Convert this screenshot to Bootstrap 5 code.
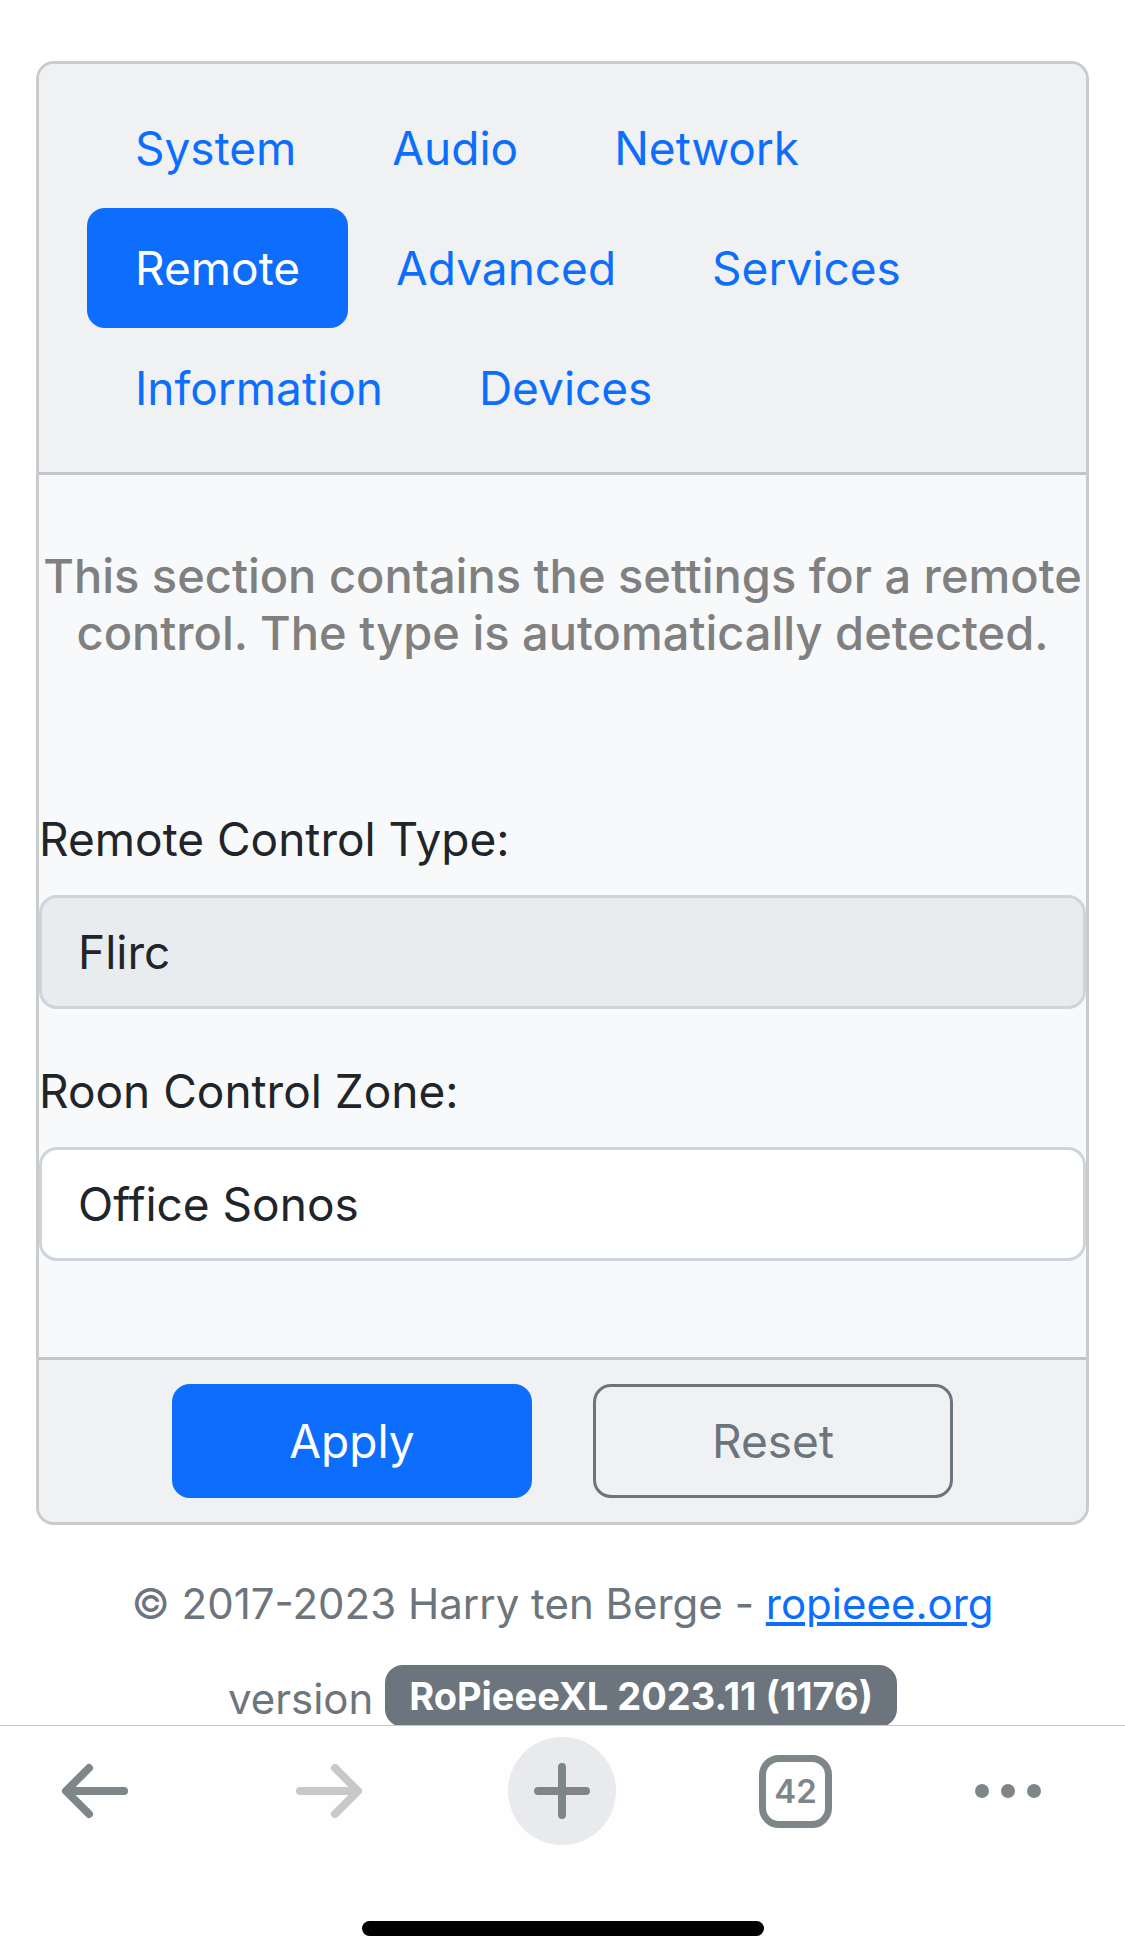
<!DOCTYPE html>
<html lang="en">
<head>
<meta charset="utf-8">
<meta name="viewport" content="width=device-width, initial-scale=1">
<title>RoPieee - Remote</title>
<link href="https://cdn.jsdelivr.net/npm/bootstrap@5.3.0/dist/css/bootstrap.min.css" rel="stylesheet">
<style>
  /* One rem is 48px, so Bootstrap's own paddings and radii scale with it */
  html { font-size: 48px; }
  body {
    --bs-border-width: 3px;
    font-family: Inter, "Liberation Sans", sans-serif;
    font-size: 46px;
    line-height: 72px;
    background: #fff;
    color: #212529;
  }
  .page { padding: 61px 36px 240px; }
  .panel {
    --bs-card-border-width: 3px;
    --bs-card-border-color: #c9cbcd;
    --bs-card-inner-border-radius: 15px;
    --bs-card-cap-bg: #eff1f2;
    background: #f8f9fb;
  }
  .panel .card-header { border-bottom: 3px solid #c3c5c8; padding: 24px 48px; }
  .panel .card-body { padding: 0 0 96px; }
  .panel .card-footer { border-top: 3px solid #c3c5c8; padding: 24px; gap: 61px; }
  .panel .nav-link { font-size: 46px; line-height: 72px; color: #0d6efd; }
  .panel .nav-link.active { color: #fff; background: #0d6efd; }
  .intro {
    font-size: 47px;
    font-weight: 500;
    line-height: 57px;
    color: #808080;
    margin: 72px 0 142px;
  }
  .field { margin-bottom: 46px; }
  .field .form-label { display: block; margin-bottom: 20px; }
  .field .form-control { font-size: 46px; line-height: 72px; height: 114px; border: 3px solid #ced4da; padding: 18px 36px; color: #212529; }
  .field .form-control[readonly] { background: #e9ecef; }
  .panel .btn { width: 360px; font-size: 46px; line-height: 72px; border-width: 3px; padding: 18px 36px; }
  .credits { font-size: 42px; line-height: 63px; color: #6c757d; padding-top: 47px; }
  .credits p { margin: 0 0 30px; }
  .credits .badge { font-size: 38px; line-height: 36px; padding: 13px 24px; border-radius: 18px; background: #6c757d; vertical-align: 4px; }
  .browser-bar { background: #fefefe; border-top: 1px solid #c8c8ca; height: 235px; }
  .tools { padding: 11px 84px 0 41px; color: #7f8689; }
  .tools .tool { width: 108px; height: 108px; padding: 0; border: 0; background: none; color: inherit; border-radius: 50%; }
  .tools .tool:last-child { width: 66px; }
  .tools .tool:disabled { color: #c8c8c8; }
  .tools .tool-new { background: #e8eaed; }
  .tools svg { display: block; margin: auto; fill: none; stroke: currentColor; stroke-width: 8; stroke-linecap: round; stroke-linejoin: round; }
  .tab-count { width: 73px; height: 73px; border: 7px solid currentColor; border-radius: 20px; font-size: 33px; font-weight: 600; line-height: 33px; }
  .home-line { width: 402px; height: 15px; border-radius: 8px; background: #000; margin: 76px auto 0; }
</style>
<script src="https://cdn.jsdelivr.net/npm/bootstrap@5.3.0/dist/js/bootstrap.bundle.min.js"></script>
</head>
<body>
<main class="page">
  <form class="card panel">
    <div class="card-header">
      <ul class="nav nav-pills">
        <li class="nav-item"><a class="nav-link" href="#system">System</a></li>
        <li class="nav-item"><a class="nav-link" href="#audio">Audio</a></li>
        <li class="nav-item"><a class="nav-link" href="#network">Network</a></li>
        <li class="nav-item"><a class="nav-link active" aria-current="page" href="#remote">Remote</a></li>
        <li class="nav-item"><a class="nav-link" href="#advanced">Advanced</a></li>
        <li class="nav-item"><a class="nav-link" href="#services">Services</a></li>
        <li class="nav-item"><a class="nav-link" href="#information">Information</a></li>
        <li class="nav-item"><a class="nav-link" href="#devices">Devices</a></li>
      </ul>
    </div>
    <div class="card-body">
      <p class="intro text-center">This section contains the settings for a remote control. The type is automatically detected.</p>
      <div class="field">
        <label class="form-label" for="remote-type">Remote Control Type:</label>
        <input class="form-control" id="remote-type" type="text" value="Flirc" readonly>
      </div>
      <div class="field mb-0">
        <label class="form-label" for="roon-zone">Roon Control Zone:</label>
        <select class="form-control" id="roon-zone"><option>Office Sonos</option></select>
      </div>
    </div>
    <div class="card-footer d-flex justify-content-center">
      <button class="btn btn-primary" type="submit">Apply</button>
      <button class="btn btn-outline-secondary" type="reset">Reset</button>
    </div>
  </form>
  <footer class="credits text-center">
    <p>© 2017-2023 Harry ten Berge - <a href="https://ropieee.org">ropieee.org</a></p>
    <p>version <span class="badge">RoPieeeXL 2023.11 (1176)</span></p>
  </footer>
</main>
<nav class="browser-bar fixed-bottom" aria-label="Browser">
  <div class="tools d-flex justify-content-between align-items-center">
    <button class="tool" type="button" aria-label="Back">
      <svg width="68" height="60" viewBox="0 0 68 60"><path d="M63 30H6M28 7L5 30L28 53"/></svg>
    </button>
    <button class="tool" type="button" aria-label="Forward" disabled>
      <svg width="68" height="60" viewBox="0 0 68 60"><path d="M5 30H62M40 7L63 30L40 53"/></svg>
    </button>
    <button class="tool tool-new" type="button" aria-label="New tab">
      <svg width="60" height="60" viewBox="0 0 60 60"><path d="M30 6V54M6 30H54"/></svg>
    </button>
    <button class="tool d-flex align-items-center justify-content-center" type="button" aria-label="Tabs">
      <span class="tab-count d-flex align-items-center justify-content-center">42</span>
    </button>
    <button class="tool" type="button" aria-label="Menu">
      <svg width="66" height="16" viewBox="0 0 66 16"><g fill="currentColor" stroke="none"><circle cx="7" cy="8" r="7"/><circle cx="33" cy="8" r="7"/><circle cx="59" cy="8" r="7"/></g></svg>
    </button>
  </div>
  <div class="home-line"></div>
</nav>
</body>
</html>
